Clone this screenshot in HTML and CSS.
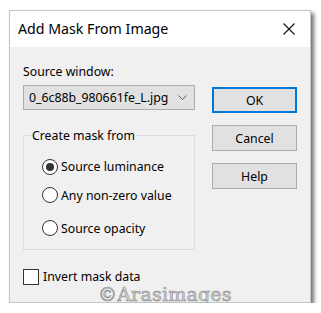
FILE: index.html
```html
<!DOCTYPE html>
<html>
<head>
<meta charset="utf-8">
<link rel="stylesheet" href="styles.css">
</head>
<body>
<div class="window">
  <div class="titlebar">
    <span class="title">Add Mask From Image</span>
    <svg class="close" width="12" height="12" viewBox="0 0 12 12"><path d="M0.5 0.5L11.5 11.5M11.5 0.5L0.5 11.5" stroke="#111" stroke-width="1.1" fill="none"/></svg>
  </div>
  <div class="content">
    <div class="left">
      <div class="label">Source window:</div>
      <div class="select">
        <span>0_6c88b_980661fe_L.jpg</span>
        <svg class="chev" width="9" height="5" viewBox="0 0 9 5"><path d="M0.5 0.5L4.5 4.5L8.5 0.5" stroke="#555" stroke-width="1" fill="none"/></svg>
      </div>
      <fieldset class="group">
        <legend>Create mask from</legend>
        <div class="radio first"><span class="dot checked"></span>Source luminance</div>
        <div class="radio"><span class="dot"></span>Any non-zero value</div>
        <div class="radio last"><span class="dot"></span>Source opacity</div>
      </fieldset>
      <div class="check"><span class="box"></span>Invert mask data</div>
    </div>
    <div class="right">
      <div class="btn default">OK</div>
      <div class="btn">Cancel</div>
      <div class="btn">Help</div>
    </div>
  </div>
  <div class="watermark">©Arasimages</div>
</div>
</body>
</html>
```
FILE: styles.css
```css
html, body { margin: 0; padding: 0; background: #fff; }
body { font-family: "Noto Sans", "Open Sans", sans-serif; font-size: 12.3px; color: #000; }
.window {
  position: relative;
  margin: 10px 0 0 9px;
  width: 300px;
  height: 291px;
  border: 1px solid #c4c4c4;
  background: #f0f0f0;
  box-shadow: 3px 3px 4px rgba(0,0,0,0.55);
}
.titlebar {
  height: 36px;
  background: #fff;
  display: flex;
  align-items: center;
  justify-content: space-between;
  padding: 0 15px 0 8px;
}
.title { font-size: 14.2px; color: #000; position: relative; top: -1px; }
.close { display: block; }
.content {
  display: flex;
  padding: 16px 13px 0 13px;
  justify-content: space-between;
}
.left { width: 172px; }
.label { height: 22px; line-height: 18px; }
.select {
  height: 23px;
  border: 1px solid #adadad;
  background: #e1e1e1;
  display: flex;
  align-items: center;
  justify-content: space-between;
  padding: 0 5px 0 5px;
}
.chev { display: block; margin-right: 2px; }
.group {
  margin: 17px 0 0 0;
  padding: 0 0 0 18px;
  border: 1px solid #dcdcdc;
  box-sizing: border-box;
  height: 123px;
}
.group legend { padding: 0 1px; margin-left: -11px; line-height: 17px; }
.radio { display: flex; align-items: center; height: 30px; }
.radio.first { margin-top: 9px; height: 27px; }
.radio.last { height: 32px; padding-top: 2px; }
.dot {
  width: 14px; height: 14px; border: 1px solid #333; border-radius: 50%;
  background: #fff; margin-right: 3px; position: relative; box-sizing: content-box;
}
.dot.checked::after {
  content: ""; position: absolute; left: 3px; top: 3px; width: 8px; height: 8px; border-radius: 50%; background: #333;
}
.check { display: flex; align-items: center; margin-top: 18px; }
.box { width: 14px; height: 14px; border: 1px solid #333; background: #fff; margin-right: 4px; }
.right { width: 85px; padding-top: 24px; display: flex; flex-direction: column; gap: 12px; }
.btn {
  height: 26px; box-sizing: border-box; border: 1px solid #adadad; background: #e1e1e1;
  display: flex; align-items: center; justify-content: center;
}
.btn.default { border: 2px solid #0078d7; }
.watermark {
  position: absolute; left: 88px; top: 272px;
  font-family: "DejaVu Serif", serif; font-size: 19px; color: #d4d4d4;
  letter-spacing: 0.2px;
  -webkit-text-stroke: 0.6px #8a8a8a;
}
```
